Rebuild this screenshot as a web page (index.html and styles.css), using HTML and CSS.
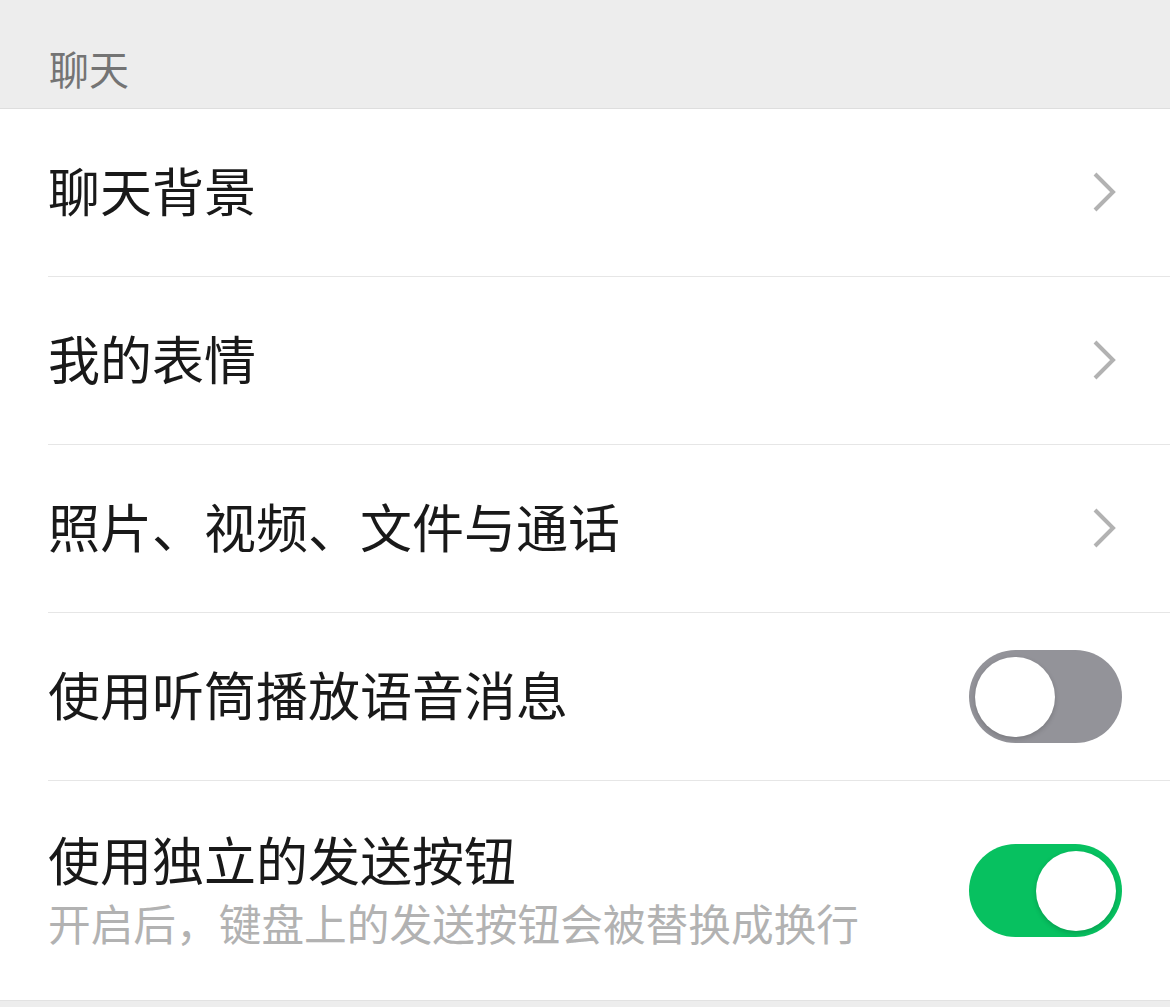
FILE: index.html
```html
<!DOCTYPE html>
<html lang="zh-CN">
<head>
<meta charset="utf-8">
<title>聊天</title>
<link rel="stylesheet" href="styles.css">
</head>
<body>
<div class="page">
  <div class="section-title">聊天</div>
  <div class="group">
    <div class="cell">
      <div class="cell-text"><div class="label">聊天背景</div></div>
      <svg class="chevron" width="26" height="42" viewBox="0 0 26 42"><path d="M3 3 L21 21 L3 39" fill="none" stroke="#b2b2b2" stroke-width="4"/></svg>
    </div>
    <div class="cell">
      <div class="cell-text"><div class="label">我的表情</div></div>
      <svg class="chevron" width="26" height="42" viewBox="0 0 26 42"><path d="M3 3 L21 21 L3 39" fill="none" stroke="#b2b2b2" stroke-width="4"/></svg>
    </div>
    <div class="cell">
      <div class="cell-text"><div class="label">照片、视频、文件与通话</div></div>
      <svg class="chevron" width="26" height="42" viewBox="0 0 26 42"><path d="M3 3 L21 21 L3 39" fill="none" stroke="#b2b2b2" stroke-width="4"/></svg>
    </div>
    <div class="cell">
      <div class="cell-text"><div class="label">使用听筒播放语音消息</div></div>
      <div class="switch off"><div class="knob"></div></div>
    </div>
    <div class="cell tall">
      <div class="cell-text">
        <div class="label">使用独立的发送按钮</div>
        <div class="desc">开启后，键盘上的发送按钮会被替换成换行</div>
      </div>
      <div class="switch on"><div class="knob"></div></div>
    </div>
  </div>
</div>
</body>
</html>
```

FILE: styles.css
```css
html, body {
  margin: 0;
  padding: 0;
  background: #ededed;
}
body {
  font-family: "Noto Sans CJK SC", "Noto Sans", sans-serif;
  width: 1170px;
  height: 1007px;
  overflow: hidden;
}
.section-title {
  box-sizing: border-box;
  height: 109px;
  padding-left: 49px;
  padding-top: 41px;
  font-size: 40px;
  line-height: 54px;
  color: #747474;
  border-bottom: 1px solid #dedede;
}
.group {
  background: #ffffff;
  border-bottom: 1px solid #e2e2e2;
}
.cell {
  display: flex;
  align-items: center;
  height: 167px;
  margin-left: 48px;
  padding-right: 48px;
  border-bottom: 1px solid #e6e6e6;
}
.cell:last-child {
  border-bottom: none;
}
.cell.tall {
  height: 219px;
}
.cell-text {
  flex: 1;
  padding-bottom: 5px;
}
.label {
  font-size: 52px;
  line-height: 60px;
  color: #191919;
}
.desc {
  font-size: 42.7px;
  line-height: 52px;
  color: #b2b2b2;
  margin-top: 7px;
}
.tall .cell-text {
  padding-bottom: 4px;
}
.chevron {
  display: block;
  margin-right: 4px;
  margin-top: -2px;
}
.switch {
  position: relative;
  box-sizing: border-box;
  width: 153px;
  height: 93px;
  border-radius: 47px;
  margin-left: -48px;
}
.switch.off {
  background: #939399;
}
.switch.on {
  background: #07c160;
}
.knob {
  position: absolute;
  top: 7px;
  width: 80px;
  height: 80px;
  border-radius: 50%;
  background: #ffffff;
  box-shadow: 0 2px 5px rgba(0, 0, 0, 0.18);
}
.switch.off .knob {
  left: 6px;
}
.switch.on .knob {
  right: 6px;
}
```
